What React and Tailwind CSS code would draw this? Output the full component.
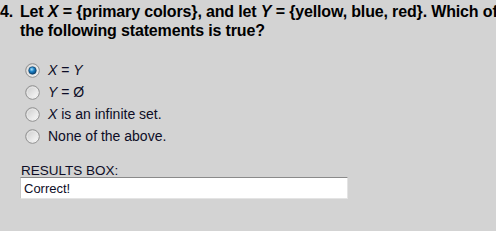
import React from "react";

function Radio({ checked }) {
  return (
    <svg width="15" height="15" viewBox="0 0 15 15" className="shrink-0">
      <defs>
        <linearGradient id="rg" x1="0" y1="0" x2="1" y2="1">
          <stop offset="0" stopColor="#c9c9c9" />
          <stop offset="1" stopColor="#ffffff" />
        </linearGradient>
        <radialGradient id="bd" cx="0.4" cy="0.35" r="0.7">
          <stop offset="0" stopColor="#a8e4ff" />
          <stop offset="0.45" stopColor="#1a7fc4" />
          <stop offset="1" stopColor="#0b3f6e" />
        </radialGradient>
      </defs>
      <circle cx="7.5" cy="7.5" r="6.8" fill="url(#rg)" stroke="#8f8f8f" strokeWidth="1" />
      <circle cx="7.5" cy="7.5" r="5.3" fill="none" stroke="#e8e8e8" strokeWidth="0.8" />
      {checked && <circle cx="7.5" cy="7.5" r="3.8" fill="url(#bd)" stroke="#0e3a5e" strokeWidth="0.6" />}
    </svg>
  );
}

export default function App() {
  const font = { fontFamily: '"Liberation Sans", Arial, sans-serif' };
  const options = [
    [<><i>X</i> = <i>Y</i></>, true],
    [<><i>Y</i> = Ø</>, false],
    [<><i>X</i> is an infinite set.</>, false],
    [<>None of the above.</>, false],
  ];
  return (
    <div className="w-[496px] h-[231px] overflow-hidden bg-[#d3d3d3] text-[#0d0d26]" style={font}>
      <div className="flex w-[520px] pt-[2px] text-[16px] leading-[19px] font-bold tracking-[-0.15px] text-black">
        <div className="w-[20px] shrink-0">4.</div>
        <div>
          Let <i>X</i> = {"{"}primary colors{"}"}, and let <i>Y</i> = {"{"}yellow, blue, red{"}"}. Which of the following statements is true?
        </div>
      </div>
      <div className="flex flex-col gap-[6px] mt-[22px] pl-[25px] text-[14px] leading-[16px]">
        {options.map(([label, checked], i) => (
          <div key={i} className="flex items-center gap-[8px]">
            <Radio checked={checked} />
            <span>{label}</span>
          </div>
        ))}
      </div>
      <div className="pl-[20px] mt-[19px] text-[13.5px] leading-[15px]">
        <div className="pl-[1px]">RESULTS BOX:</div>
        <div className="mt-[-1px] w-[328px] h-[22px] bg-white border border-t-[#8a8a8a] border-l-[#c8c8c8] border-r-[#e4e4e4] border-b-[#e4e4e4] flex items-center pl-[3px] text-[13px]">
          Correct!
        </div>
      </div>
    </div>
  );
}
